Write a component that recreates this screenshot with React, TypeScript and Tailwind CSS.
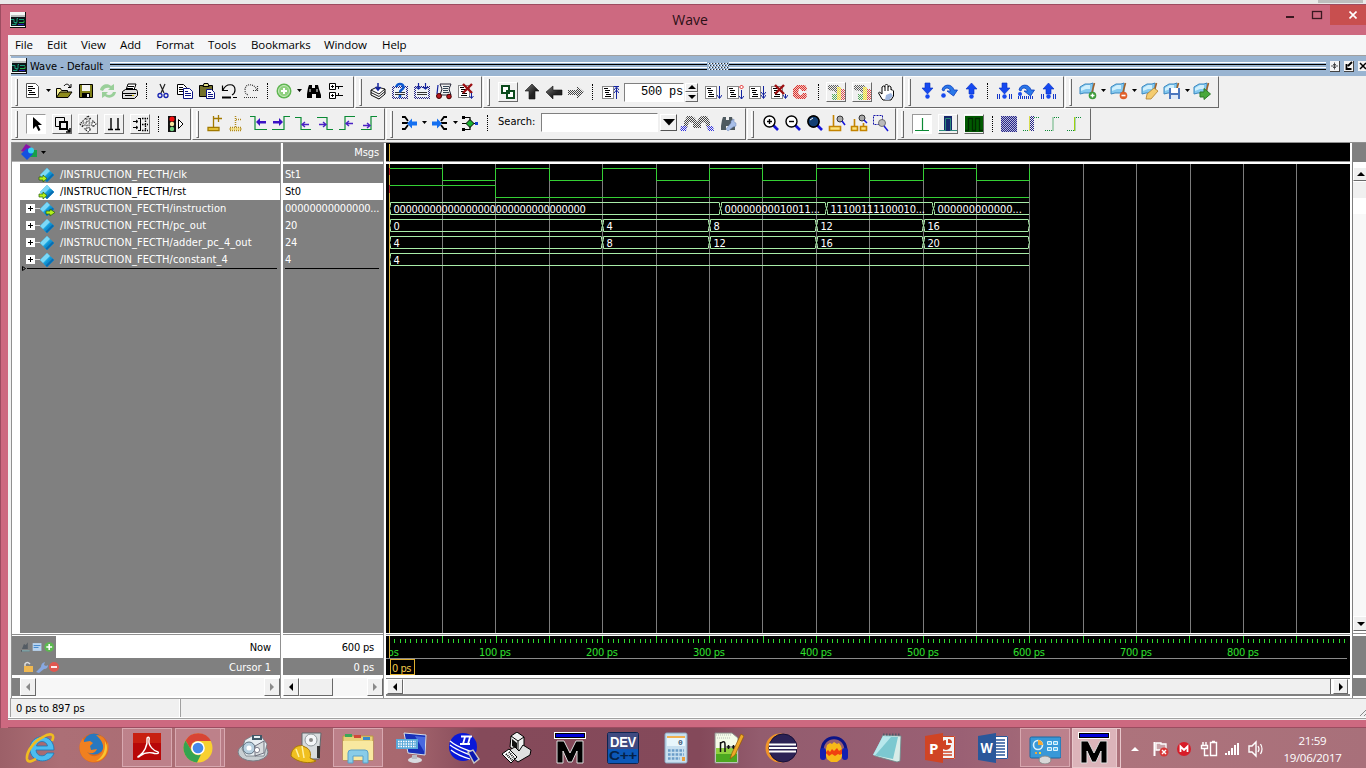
import React from "react";

const r = (x: number, y: number, w: number, h: number, f: string, k?: string) => (
  <rect key={k} x={x} y={y} width={w} height={h} fill={f} />
);
const p = (d: string, s = "#000", f = "none", w = 1) => (
  <path d={d} stroke={s} fill={f} strokeWidth={w} />
);

const sheet = (
  <>
    {r(1, 3, 12, 13, "#888")}
    {r(2, 4, 10, 11, "#fff")}
    {p("M3 5.500h4M4 7.500h5M4 9.500h4M5 11.500h5M4 13.500h6", "#000", "none", 1.2)}
  </>
);
const redX = p("M5 2l9 9M14 2l-9 9", "#9c0f12", "none", 2.4);
const flag = (
  <>
    <path d="M1 5l5-3h5l3-1v9l-4 1H5l-4 1z" fill="#86caf0" stroke="#3b88c0" strokeWidth="1" />
    <path d="M2 6l5-3h4v4H7l-5 2z" fill="#d0effc" />
    <path d="M15.500 1l-3 11" stroke="#a0622b" strokeWidth="1.600" />
  </>
);
const lens = (
  <>
    <path d="M11 11l5 5" stroke="#1414d8" strokeWidth="2.600" />
    <circle cx="7.500" cy="7.500" r="5.500" fill="#fff" stroke="#000" strokeWidth="1.400" />
  </>
);
const binocs = (c: string) => (
  <path d="M4 3h3v3h3V3h3l1 4 2 6v3h-5v-4H7v4H2v-4l1-6z" fill={c} />
);
const jump = (
  <path d="M2 8C3 2 12 1 14 8h3.500L13.500 14 7 9h3.500C9 5 5 5 4 9z" fill="#2a78e8" stroke="#0a3cc0" strokeWidth=".8" />
);
const down = <path d="M7 1h5v5h3l-5.500 6L4 6h3z" fill="#1649f0" stroke="#0630c0" strokeWidth=".6" />;
const up = <path d="M7 12h5V7h3L9.500 1 4 7h3z" fill="#1649f0" stroke="#0630c0" strokeWidth=".6" />;
const dots = p("M2.500 12v5M4.500 12v5M14.500 12v5M16.500 12v5", "#1638c8");
const ball = <circle cx="9.500" cy="14.500" r="2.200" fill="#1649f0" />;
const books = (
  <>
    {p("M2 8v5l8 4 6-5V7", "#000", "#fff")}
    {p("M2 8l6-3 8 2-6 5zM2 10.500l8 4 6-5", "#000", "none", .9)}
  </>
);
const chip = (
  <>
    {r(1, 4, 16, 13, "url(#nv)")}
    {r(3, 6, 12, 9, "#eef2f6")}
    {p("M4 10.500h10M4 12.500h10", "#333", "none", 1)}
  </>
);

const icons: Record<string, React.ReactNode> = {
  doc: (
    <>
      {p("M3.500 1.500h9l3 3v11h-12z", "#555", "#fff")}
      {p("M5 4.500h5M5 6.500h7M5 8.500h4M6 10.500h6M5 12.500h8", "#000")}
    </>
  ),
  open: (
    <>
      {p("M1.500 15.500v-9h4l1 2h6v2", "#000", "#f7f29a")}
      {p("M1.500 15.500l3.500-5.500h12l-4 5.500z", "#000", "#8e8b1c")}
      {p("M9 4c2-3 5-2 6 1M16 2v3.500h-3", "#000")}
    </>
  ),
  save: (
    <>
      {p("M2.500 2.500h13v13h-13z", "#000", "#7f8019")}
      {r(5, 3, 8, 6, "#f4f4f4")}
      {r(5, 11, 8, 4, "#000")}
      {r(10, 12, 2, 3, "#eee")}
    </>
  ),
  reload: (
    <g opacity=".75">
      <path d="M1 8c1-6 8-7 11-4l3-2v6H9l2-2C8 5 5 6 4 9z" fill="#7cc47c" />
      <path d="M17 10c-1 6-8 7-11 4l-3 2v-6h6l-2 2c3 2 6 1 7-2z" fill="#7cc47c" />
    </g>
  ),
  print: (
    <>
      {p("M5 8l2-6h8l-2 6", "#000", "#fff")}
      {p("M1.500 9.500l3-2h11l1 2v4l-3 3h-12z", "#000", "#ddd")}
      {p("M7 4.500h6M6 6.500h6M2 11.500h13M4 13.500h7", "#000")}
      {r(11, 13, 2, 1, "#c8b400")}
    </>
  ),
  cut: (
    <>
      {p("M6 2l4 9M11 2l-4 9", "#222", "none", 1.2)}
      <circle cx="6" cy="13.500" r="2" fill="none" stroke="#1420b0" strokeWidth="1.300" />
      <circle cx="12" cy="13.500" r="2" fill="none" stroke="#1420b0" strokeWidth="1.300" />
    </>
  ),
  copy: (
    <>
      {p("M1.500 2.500h6l3 3v7h-9z", "#000", "#fff")}
      {p("M3 5.500h4M3 7.500h5M3 9.500h4", "#000")}
      {p("M7.500 6.500h6l3 3v7h-9z", "#0c1484", "#fff")}
      {p("M9 9.500h3M9 11.500h6M9 13.500h6", "#0c1484")}
    </>
  ),
  paste: (
    <>
      {p("M1.500 3.500h13v11h-13z", "#000", "#73702b")}
      {p("M5 4.500l1-3h4l1 3z", "#000", "#e8e48c")}
      {p("M8.500 7.500h5l3 3v6h-8z", "#0c1484", "#fff")}
      {p("M10 10.500h3M10 12.500h5M10 14.500h5", "#0c1484")}
    </>
  ),
  undo: (
    <>
      {p("M2.500 9V3.500M2 8.500h6M3 8C6 1 15 1 15 8c0 3-1 4-3 5", "#000", "none", 1.2)}
      {p("M2 15.500h9", "#000", "none", 2)}
      {p("M13 15.500h4", "#000")}
    </>
  ),
  redo: (
    <g strokeDasharray="1 1">
      {p("M15.500 9V3M16 8.500h-6M15 8C12 1 3 1 3 8c0 3 1 4 3 5M2 15.500h14", "#333", "none", 1.2)}
    </g>
  ),
  plus: (
    <>
      <circle cx="9" cy="9" r="7.500" fill="#5fb551" />
      <circle cx="9" cy="9" r="5.500" fill="#8fd07f" stroke="#c9ecc0" strokeWidth="1" />
      {p("M9 6v6M6 9h6", "#fff", "none", 2)}
    </>
  ),
  find: (
    <>
      {binocs("#000")}
      {p("M5 7v3M12 7v3", "#fff")}
    </>
  ),
  tree: (
    <>
      {p("M2.500 1.500h6v6h-6zM2.500 10.500h6v6h-6z", "#000", "#fff")}
      {p("M4 4.500h3M5.500 3v3M4 13.500h3M5.500 12v3M9 4.500h7M9 13.500h7M11.500 4v3M11.500 11v3", "#000")}
    </>
  ),
  compile: (
    <>
      {books}
      {p("M9 1v6M6.500 5L9 8l2.500-3", "#1323a0", "none", 1.5)}
    </>
  ),
  help: (
    <>
      {chip}
      {p("M5.500 5c0-4 7-4 7 0 0 3-3.500 2-3.500 5.500M9 13v2.500", "#0d58d0", "none", 2.6)}
    </>
  ),
  all: (
    <>
      {chip}
      {p("M5.500 1v6M12.500 1v6M3 5l2.500 2L8 5M10 5l2.500 2L15 5", "#1323a0", "none", 1.2)}
    </>
  ),
  sim: (
    <>
      {p("M5 2h11l-2 5 2 6H5l2-6z", "#223", "#f2f2f2")}
      {p("M8 4.500h6M8 6.500h5M8 8.500h5M8 10.500h6", "#345")}
      {p("M3 3l-1 9", "#1323a0", "none", 1.2)}
      <circle cx="4" cy="14" r="2.500" fill="#b8161e" stroke="#400" />
      <circle cx="14" cy="14.500" r="2.300" fill="#b8161e" stroke="#400" />
    </>
  ),
  brk: (
    <>
      {sheet}
      {p("M6 2l9 9M15 2l-9 9", "#9c0f12", "none", 2.4)}
      {p("M14.500 11v5M12.500 14l2 2.500 2-2.500", "#1323a0")}
    </>
  ),
  restart: (
    <>
      {p("M3 3h7v7H3zM8 8h7v7H8z", "#0b4a1c", "#fff", 2)}
      {p("M6 10h4V6", "#0b4a1c", "none", 2)}
    </>
  ),
  aup: <path d="M9 1l7 7h-4v8H6V8H2z" fill="url(#met)" stroke="#111" strokeWidth=".6" />,
  aleft: <path d="M1 9l7-6v4h9v5H8v4z" fill="url(#met)" stroke="#111" strokeWidth=".6" />,
  aright: <path d="M17 9l-7-6v4H1v5h9v4z" fill="url(#dk)" />,
  runup: (
    <>
      {sheet}
      {p("M15.500 5v11M12.500 3.500h6M13 7l2.500-3L18 7M13 10l2.500-3L18 10", "#1323a0")}
    </>
  ),
  run1: (
    <>
      {sheet}
      {p("M15.500 3v12M13 12l2.500 3.500L18 12", "#1323a0")}
    </>
  ),
  run2: (
    <>
      {sheet}
      {p("M15.500 7v9M13 13l2.500 3L18 13", "#1323a0")}
      {p("M15.500 2l2 2-2 2-2-2z", "#e02020", "#fff")}
    </>
  ),
  run3: (
    <>
      {sheet}
      {p("M15.500 3v12M13 9l2.500 3L18 9M13 12l2.500 3.500L18 12", "#1323a0")}
    </>
  ),
  run4: (
    <>
      {sheet}
      {redX}
      {p("M15.500 11v4M13 12l2.500 3.500L18 12", "#1323a0")}
    </>
  ),
  stop: (
    <>
      <path d="M6 2h8l2 3-1 3h-4l-1-2H8L7 9l1 3h3l1-2h3l1 3-2 3H6l-4-3V6z" fill="#f4c8c0" />
      <path d="M6 2h8l2 3-1 3h-4l-1-2H8L7 9l1 3h3l1-2h3l1 3-2 3H6l-4-3V6z" fill="url(#rd)" />
    </>
  ),
  prof: (
    <g opacity=".85">
      <path d="M1 2h10l2 4-3 4-3-2-6-1z" fill="url(#dk)" />
      {r(10, 4, 4, 13, "#f6efa8")}
      {r(10, 4, 4, 13, "url(#yl)")}
      {r(14, 6, 4, 11, "url(#rd)")}
      {r(5, 11, 5, 6, "url(#gn)")}
    </g>
  ),
  hand: (
    <>
      <path
        d="M5 16L1.500 10l1-1L5 11V4l1.500-1L8 4V2.500L9.500 1 11 2.500V4l1.500-1L14 4v3l1-.500L16.500 8v5L14 17H6z"
        fill="#fff"
        stroke="#000"
      />
      {p("M8 4v4M11 4v4", "#000")}
      <path d="M9 12l5-2 2 3-4 4H8z" fill="#9fb6df" />
    </>
  ),
  sdown: (<>{down}{ball}</>),
  sover: (<>{jump}<circle cx="3.500" cy="13.500" r="2.300" fill="#1649f0" /></>),
  sup: (<>{up}{ball}</>),
  sdown2: (<>{down}{ball}{dots}</>),
  sover2: (
    <>
      {jump}
      {p("M1.500 14v3M3.500 14v3M5.500 14v3M7.500 14v3M9.500 14v3M11.500 14v3M13.500 14v3M15.500 14v3", "#1638c8")}
      <circle cx="3" cy="12" r="2" fill="#1649f0" />
    </>
  ),
  sup2: (<>{up}{ball}{dots}</>),
  f1: (<>{flag}<circle cx="13.500" cy="13.500" r="3.800" fill="#3d9a3a" />{p("M13.500 11.500v4M11.500 13.500h4", "#fff", "none", 1.4)}</>),
  f2: (<>{flag}<circle cx="13.500" cy="13.500" r="3.800" fill="#e0602a" />{p("M11.500 13.500h4", "#fff", "none", 1.6)}</>),
  f3: (<>{flag}<path d="M5 17l1-5 7-6 4 3-7 8z" fill="#f4cc70" stroke="#b08030" strokeWidth=".8" /></>),
  f4: (<>{flag}{r(6, 6, 11, 11, "#4d78bf")}{r(8, 6, 7, 5, "#fff")}{r(8, 13, 7, 4, "#dfeaf8")}</>),
  f5: (<>{flag}<path d="M7 10h4V6.500l6.500 5.500-6.500 5.500V15H7z" fill="#49a83c" stroke="#2c7a26" /></>),
  ptr: <path d="M6 2v12l3-3 2.500 5 2-1L11 10h4z" fill="#000" />,
  sel: (
    <>
      {p("M2.500 2.500h9v4M2.500 2.500v9h4", "#000")}
      {p("M7 7h7v7H7z", "#000", "none", 2)}
      {p("M13 13l4 4M17 13v4h-4", "#000", "none", 1.5)}
    </>
  ),
  pan: (
    <g strokeDasharray="1.500 1">
      {p("M9 1l3 3h-2v4h4V6l3 3-3 3v-2h-4v4h2l-3 3-3-3h2v-4H4v2L1 9l3-3v2h4V4H6z", "#222", "#fff", 1.1)}
    </g>
  ),
  twoc: p("M6 3v12M13 3v12M3 14.500h5M10 14.500h5", "#000", "none", 1.4),
  edit: (
    <>
      {p("M2 6.500h4M2 12.500h4M5 5l2 1.500L5 8M5 11l2 1.500L5 14M9.500 3v12M7 3.500h3M7 15.500h3", "#000")}
      <g strokeDasharray="1.500 1">{p("M14.500 3v13M11 3.500h6M11 15.500h6M11 9.500h6", "#000", "none", 1.3)}</g>
    </>
  ),
  light: (
    <>
      {r(1, 1, 8, 16, "#111")}
      <circle cx="5" cy="4" r="2.600" fill="#f01010" />
      <circle cx="5" cy="9" r="2.200" fill="#f7e8a0" />
      <circle cx="5" cy="14" r="2.200" fill="#70d080" />
      {p("M11.500 4.500v9l4.500-4.500z", "#000", "#fff")}
    </>
  ),
  cadd: (
    <>
      {p("M2 13.500h11v3H2zM7.500 2v11", "#a27a00", "#f6d648", 1.3)}
      {p("M8 4.500h8M12.500 1v7", "#a27a00", "none", 1.3)}
    </>
  ),
  cdel: <g strokeDasharray="1 1">{p("M2 13.500h11v3H2zM7.500 2v11M8 5.500h6", "#b08a20", "#f6e490", 1.5)}</g>,
  tprev: (<>{p("M0 2.500h5v13h12", "#0a8a34", "none", 1.2)}<path d="M6 8l4-4v3h6v2.500h-6V12z" fill="#3a12c4" /></>),
  tnext: (<>{p("M0 15.500h12v-13h6", "#0a8a34", "none", 1.2)}<path d="M11 8L7 4v3H1v2.500h6V12z" fill="#3a12c4" /></>),
  fprev: (<>{p("M1 3.500h6v12h10", "#0a8a34", "none", 1.2)}{p("M8 10.500h7M11 8l-3 2.500 3 2.500", "#4a22c4", "none", 1.4)}</>),
  fnext: (<>{p("M1 3.500h10v12h6", "#0a8a34", "none", 1.2)}{p("M3 10.500h7M7 8l3 2.500L7 13", "#4a22c4", "none", 1.4)}</>),
  rprev: (<>{p("M1 15.500h6v-13h10", "#0a8a34", "none", 1.2)}{p("M8 9.500h7M11 7L8 9.500 11 12", "#4a22c4", "none", 1.4)}</>),
  rnext: (<>{p("M1 15.500h10v-13h6", "#0a8a34", "none", 1.2)}{p("M3 11.500h7M7 9l3 2.500L7 14", "#4a22c4", "none", 1.4)}</>),
  drv: (<>{p("M2 3h3l3 4M2 15h3l3-4M2 9h6", "#000", "none", 1.8)}<path d="M7 9.500l5-5v3h5v4h-5v3z" fill="#1570f0" /></>),
  rdr: (<>{p("M16 3h-3l-3 4M16 15h-3l-3-4M10 9h6", "#000", "none", 1.8)}<path d="M11 9.500l-5-5v3H1v4h5v3z" fill="#1570f0" /></>),
  net: (
    <>
      {p("M4 3.500h5v12H4M1 9.500h14", "#000", "none", 1.2)}
      {r(1, 2, 3, 3, "#000")}{r(1, 14, 3, 3, "#000")}{r(14, 8, 3, 3, "#1540d0")}
      <path d="M9 5.500l4 4-4 4-4-4z" fill="#1ab030" stroke="#000" />
    </>
  ),
  bin1: (<><path d="M8 2h5l3 2 2 4v6h-4V9l-4-1-2 6H5V8z" fill="url(#dk)" /><path d="M1 17l1-5h6l-1 5z" fill="url(#bl)" /></>),
  bin2: (<><path d="M10 2H5L2 4 0 8v6h4V9l4-1 2 6h3V8z" fill="url(#dk)" /><path d="M17 17l-1-5h-6l1 5z" fill="url(#bl)" /></>),
  opt: (<>{binocs("#4e5a60")}<path d="M9 17l-2-2 5-6V7l3-2v3l2 1v3l-3 1z" fill="#a8bfe8" stroke="#6c86b8" strokeWidth=".5" /></>),
  zin: (<>{lens}{p("M5 7.500h5M7.500 5v5", "#000", "none", 1.4)}</>),
  zout: (<>{lens}{p("M5 7.500h5", "#000", "none", 1.4)}</>),
  zfull: (<>{lens}<circle cx="7.500" cy="7.500" r="5.500" fill="#123f74" stroke="#000" strokeWidth="1.400" /><path d="M4 6l3-2" stroke="#fff" /></>),
  zc: (<>{p("M1.500 12.500h11v4h-11zM5.500 1v11", "#c48400", "#fbe27a", 1.6)}<circle cx="12" cy="5" r="3" fill="#aaa" stroke="#333" />{p("M14 7l3 4", "#1414d8", "none", 1.5)}</>),
  zc2: (<>{p("M1.500 12.500h6v4h-6zM10.500 12.500h6v4h-6zM4.500 5v7M13.500 9v3", "#c48400", "#fbe27a", 1.6)}<circle cx="12" cy="4" r="3" fill="#aaa" stroke="#333" />{p("M14 6l3 3", "#1414d8", "none", 1.5)}</>),
  zsel: (<><g strokeDasharray="2 1">{p("M1.500 1.500h9v9h-9z", "#1414a8")}</g><circle cx="10" cy="9" r="3.500" fill="#bbb" stroke="#666" strokeWidth=".9" />{p("M12 12l4 5", "#1414d8", "none", 1.5)}</>),
  w1: p("M2 15.500h14M9.500 3v12", "#0a8a34", "none", 1.2),
  w2: (<>{r(5, 1, 8, 15, "#16286c")}{p("M0 15.500h6.500v-12h5v12H18", "#2b8a7a")}</>),
  w3: (<>{r(0, 1, 18, 16, "#005a00")}{p("M0 15.500h3.500v-12h4v12h3v-12h4v12h4", "#002c00", "none", 1.3)}</>),
  w4: (<>{r(1, 1, 16, 16, "#b8b8d8")}{r(1, 1, 16, 16, "url(#nv)")}</>),
  w5: (<>{r(8, 1, 4, 15, "url(#nv)")}{r(7, 1, 1, 15, "#d8dc50")}<g strokeDasharray="1 1">{p("M1 15.500h6M12 2.500h5", "#0a8a34")}</g></>),
  w6: <g strokeDasharray="1 1">{p("M1 15.500h8v-13h7", "#0a8a34", "none", 1.2)}</g>,
  w7: (<>{r(8, 2, 1, 14, "#e0f000")}<g strokeDasharray="1 1">{p("M1 15.500h8v-13h7", "#0a8a34", "none", 1.2)}</g></>),
};

const Ic = ({ n, c = "w-[22px]" }: { n: string; c?: string }) => (
  <span className={`flex shrink-0 justify-center ${c}`}>
    <svg width="18" height="18" viewBox="0 0 18 18">{icons[n]}</svg>
  </span>
);
const Btn = ({ n, on, c = "" }: { n: string; on?: boolean; c?: string }) => (
  <span
    className={`flex h-5 w-5 shrink-0 items-center justify-center border ${c} ${
      on ? "border-[#999] border-r-white border-b-white bg-white" : "border-white border-r-[#696969] border-b-[#696969] bg-[#f0f0f0]"
    }`}
  >
    <svg width="18" height="18" viewBox="0 0 18 18">{icons[n]}</svg>
  </span>
);
const Arr = ({ c = "w-[10px]" }: { c?: string }) => (
  <span className={`flex shrink-0 justify-center ${c}`}>
    <svg width="5" height="3" viewBox="0 0 5 3"><path d="M0 0h5L2.500 3z" /></svg>
  </span>
);
const Sep = ({ c = "w-[11px]" }: { c?: string }) => (
  <span className={`flex shrink-0 justify-center ${c}`}>
    <span className="h-[16px] border-l border-dotted border-black" />
  </span>
);
const Bar = ({ c, pad, children }: { c: string; pad: string; children: React.ReactNode }) => (
  <div className={`flex h-8 shrink-0 border-t border-l border-r border-b border-t-white border-l-white border-r-[#696969] border-b-[#696969] ${c}`}>
    <div className="mt-[2px] ml-[3px] h-[27px] w-[3px] shrink-0 border-r border-b border-l border-white border-r-[#696969] border-b-[#696969]" />
    <div className={`flex items-center ${pad}`}>{children}</div>
  </div>
);

const App16 = () => (
  <svg width="16" height="16" viewBox="0 0 16 16" className="shrink-0">
    {r(0, 0, 16, 16, "#111")}
    {r(0, 0, 15, 15, "#f4f6f6")}
    {r(1, 3, 14, 2, "#b8bcbc")}
    {r(1, 5, 14, 9, "#0c1418")}
    {p("M1 7.500h3v3h3v-4h1M9 7.500h5M2 12.500h4v-2", "#1a9a7a", "none", 1)}
    {p("M9 10.500h5v-2", "#27b04a")}
    {r(8, 12, 6, 1, "#2424c0")}
  </svg>
);

const Gem = ({ a }: { a?: "in" | "out" }) => (
  <svg width="18" height="16" viewBox="0 0 18 16" className="shrink-0">
    <path d="M9 1l7 7-7 7-7-7z" fill="#18a4e0" />
    <path d="M9 1L2 8l3 3 7-7z" fill="#7cd8f6" />
    <path d="M9 15l7-7-3-3-7 7z" fill="#1090d0" />
    <path d="M9 15l7-7-1.500-1.500-7 7z" fill="#0a6cb0" />
    {a === "in" && <path d="M1 10h4V8l4 3.500L5 15v-2H1z" fill="#b4f01c" stroke="#245c08" strokeWidth=".7" />}
    {a === "out" && <path d="M8 10h4V8l5 3.500-5 3.500v-2H8z" fill="#b4f01c" stroke="#245c08" strokeWidth=".7" />}
  </svg>
);

const signals: { n: string; v: string; a?: "in" | "out"; x?: boolean; s?: boolean }[] = [
  { n: "/INSTRUCTION_FECTH/clk", v: "St1", a: "in" },
  { n: "/INSTRUCTION_FECTH/rst", v: "St0", a: "in", s: true },
  { n: "/INSTRUCTION_FECTH/instruction", v: "00000000000000...", a: "out", x: true },
  { n: "/INSTRUCTION_FECTH/pc_out", v: "20", x: true },
  { n: "/INSTRUCTION_FECTH/adder_pc_4_out", v: "24", x: true },
  { n: "/INSTRUCTION_FECTH/constant_4", v: "4", x: true },
];

const gx = [56, 109, 163, 216, 270, 323, 376, 430, 483, 537, 590, 643, 697, 750, 804, 857, 910];
const OX = 3;

type Seg = { x: number; t: string; w: number };
const buses: { y: number; end: boolean; segs: Seg[] }[] = [
  { y: 38, end: false, segs: [
    { x: 3, t: "00000000000000000000000000000000", w: 192 },
    { x: 334, t: "00000000010011...", w: 95 },
    { x: 440, t: "11100111100010...", w: 94 },
    { x: 547, t: "000000000000...", w: 84 },
  ] },
  { y: 55, end: true, segs: [
    { x: 3, t: "0", w: 6 }, { x: 216, t: "4", w: 6 }, { x: 323, t: "8", w: 6 }, { x: 430, t: "12", w: 12 }, { x: 537, t: "16", w: 12 },
  ] },
  { y: 72, end: true, segs: [
    { x: 3, t: "4", w: 6 }, { x: 216, t: "8", w: 6 }, { x: 323, t: "12", w: 12 }, { x: 430, t: "16", w: 12 }, { x: 537, t: "20", w: 12 },
  ] },
  { y: 89, end: false, segs: [{ x: 3, t: "4", w: 6 }] },
];

const Waves = () => {
  const clk = [OX, ...gx.slice(0, 12)];
  let d = `M${OX} 4.5`;
  clk.slice(1).forEach((x, i) => {
    d += `H${x + 0.5}V${i % 2 === 0 ? 16.5 : 4.5}`;
  });
  return (
    <svg width="964" height="469" viewBox="0 0 964 469" className="block bg-black">
      {gx.map((x) => <rect key={x} x={x} y="0" width="1" height="469" fill="#7c7c7c" />)}
      <path d={d} fill="none" stroke="#34d034" />
      <path d={`M${OX} 21.500H109.500V33.500H643`} fill="none" stroke="#34d034" />
      {buses.map((b) => (
        <g key={b.y}>
          {b.segs.map((s, i) => {
            const e = i + 1 < b.segs.length ? b.segs[i + 1].x : 643;
            const close = i + 1 < b.segs.length || b.end;
            return (
              <g key={s.x}>
                <path
                  d={`M${close ? e - 1 : e} ${b.y + 0.5}H${s.x + 1.5}v3l-1 3l1 3v3H${close ? e - 1 : e}`}
                  fill="none"
                  stroke="#a8eca8"
                />
                {close && <path d={`M${e - 0.5} ${b.y + 0.5}v3l1 3l-1 3v3`} fill="none" stroke="#a8eca8" />}
                <text
                  x={s.x + 4.5}
                  y={b.y + 11}
                  textLength={s.w}
                  className="fill-white text-[11px]"
                >
                  {s.t}
                </text>
              </g>
            );
          })}
        </g>
      ))}
      <rect x="3" y="0" width="1" height="469" fill="#d8b040" />
      <rect x="3" y="4" width="1" height="7" fill="#b02020" />
      <rect x="3" y="21" width="1" height="8" fill="#b02020" />
    </svg>
  );
};

const Timeline = () => (
  <svg width="964" height="39" viewBox="0 0 964 39" className="block bg-black">
    {Array.from({ length: 179 }, (_, i) => {
      const x = Math.round(OX + (i + 1) * 5.336);
      const major = (i + 1) % 10 === 0;
      return <rect key={i} x={x} y={major ? 0 : 3} width="1" height={major ? 7 : 4} fill="#2fd82f" />;
    })}
    {["100", "200", "300", "400", "500", "600", "700", "800"].map((t, i) => (
      <text key={t} x={gx[i * 2 + 1] - 16} y="20" textLength="31.500" className="fill-[#2fe02f] text-[11px]">
        {t} ps
      </text>
    ))}
    <text x="1.500" y="20" textLength="11" className="fill-[#2fe02f] text-[11px]">ps</text>
    {r(0, 0, 3, 22, "#000")}
    {r(0, 22, 961, 1, "#8a8a8a")}
    {r(3, 0, 1, 22, "#d8b040")}
    <rect x="4.500" y="23.500" width="24" height="15" fill="#000" stroke="#e0b030" />
    <text x="6" y="35.500" textLength="19" className="fill-[#f0c848] text-[11px]">0 ps</text>
  </svg>
);

const SB = ({ d, off, c = "h-full w-4" }: { d: "l" | "r" | "u" | "d"; off?: boolean; c?: string }) => (
  <div className={`flex shrink-0 items-center justify-center border border-white border-r-[#696969] border-b-[#696969] bg-[#f0f0f0] ${c}`}>
    <svg width="8" height="8" viewBox="0 0 8 8" className="shrink-0">
      <path
        d={d === "l" ? "M6 0v8L2 4z" : d === "r" ? "M2 0v8l4-4z" : d === "u" ? "M0 6h8L4 2z" : "M0 2h8L4 6z"}
        fill={off ? "#8a8a8a" : "#000"}
      />
    </svg>
  </div>
);

const M = (
  <>
    {r(0, 0, 32, 7, "#fff")}
    {r(1, 1, 30, 5, "#000")}
    {r(2, 2, 28, 3, "#0000d8")}
    <path d="M3 31V9h7l6 12 6-12h7v22h-6V19l-5 11h-4L9 19v12z" fill="#000" stroke="#ddd" strokeWidth="1" />
  </>
);

const taskIcons: { k: string; g: React.ReactNode; b?: boolean }[] = [
  { k: "ie", g: (<>
    <path d="M29 18H11c0 6 8 8 11 3h7c-4 12-24 10-24-4C5 1 29 0 29 18zM11.500 14h11c-1-6-10-6-11 0z" fill="#4cbcf0" stroke="#1878b8" strokeWidth=".8" fillRule="evenodd" />
    <path d="M27 9c4-8-3-8-9-4C9 9 1 20 2 27c1 5 7 1 9 0" fill="none" stroke="#f0bc20" strokeWidth="2.600" />
  </>) },
  { k: "ff", g: (<>
    <circle cx="16" cy="16" r="14.500" fill="#e06818" />
    <circle cx="16" cy="12" r="10.500" fill="#2878c0" />
    <path d="M18 3c6 0 10 4 10 10l2-3c2 9-3 20-14 20S0 20 2 11l3-5 1 4 6-1 3 2-3 3 1 4 6-1c-2 5-7 5-10 3 4 6 12 5 15 0 3-6 0-12-6-17z" fill="#f08020" />
    <path d="M27 9c5 9 0 19-9 20 6-3 10-10 9-20z" fill="#f8c830" />
  </>) },
  { k: "pdf", b: true, g: (<>
    {r(2, 1, 28, 27, "#b80808")}{r(2, 1, 28, 10, "#c82010")}
    <path d="M8 24c5-3 9-11 8-17 0-3 3-2 2 1-1 6 5 11 9 12 2 2-3 2-5 1-5-1-9 0-13 3-2 2-3 1-1 0z" fill="none" stroke="#fff" strokeWidth="1.400" />
  </>) },
  { k: "chrome", b: true, g: (<>
    <circle cx="16" cy="16" r="14.500" fill="#f8d030" />
    <path d="M3.500 8.500A14.500 14.500 0 0 1 29 9H16a7 7 0 0 0-6 11z" fill="#d84434" />
    <path d="M3.500 8.500l6.500 11a7 7 0 0 0 9 3l-4 8A14.500 14.500 0 0 1 3.500 8.500z" fill="#34a450" />
    <circle cx="16" cy="16" r="6.800" fill="#fff" /><circle cx="16" cy="16" r="5.300" fill="#4488e8" />
  </>) },
  { k: "disk", g: (<>
    <ellipse cx="16" cy="20" rx="15" ry="9" fill="#c8ced2" stroke="#788088" />
    <path d="M5 17l3-9 7-4h9l6 8-3 12H9z" fill="#e8eef2" stroke="#707a82" strokeWidth=".8" />
    {r(15, 3, 10, 5, "#405868")}{r(17, 4, 6, 2, "#e8f0f4")}
    <circle cx="12" cy="16" r="6" fill="#b8d0e0" stroke="#456" strokeWidth=".8" /><circle cx="12" cy="16" r="2.500" fill="#fff" />
    <path d="M18 14l9-5v12l-9 3z" fill="#d8dcde" stroke="#556" strokeWidth=".8" /><circle cx="20" cy="18" r="2.600" fill="#fff" stroke="#667" strokeWidth=".8" />
  </>) },
  { k: "hdd", g: (<>
    <path d="M12 1h19l-2 26H12z" fill="#d8dcde" stroke="#60686c" /><circle cx="21" cy="8" r="6" fill="#f4f6f8" stroke="#90989c" />
    <circle cx="21" cy="8" r="2" fill="#888" />{r(27, 14, 3, 12, "#333")}
    <path d="M1 24c0-8 8-13 14-9 6 2 6 8 5 11l6 3c-6 3-18 2-25-5z" fill="#f0c020" stroke="#a87808" />
    <path d="M6 17l3 8M12 14l2 12" stroke="#fff0a0" strokeWidth="1.500" />
  </>) },
  { k: "explorer", b: true, g: (<>
    <path d="M1 4h30v24H1z" fill="#e8d078" stroke="#b89840" />{r(3, 2, 7, 3, "#3aa858")}{r(12, 3, 7, 3, "#d04838")}{r(21, 5, 7, 3, "#3888c8")}
    <path d="M1 9h30v19H1z" fill="#f8e8a0" />
    <path d="M6 31v-10q0-3 3-3h14q3 0 3 3v10h-5v-7H11v7z" fill="#88cce8" stroke="#58a0c8" />
  </>) },
  { k: "rdp", g: (<>
    <path d="M9 1l22 2-1 20-17-2z" fill="#1830b8" stroke="#d8e0e8" /><path d="M20 4l10 1v16z" fill="#4868e0" />
    {r(1, 7, 22, 10, "#5aa8d8")}<path d="M3 9.500h18M3 12h18M3 14.500h18" stroke="#fff" strokeWidth="1.400" strokeDasharray="1.500 1" />
    <ellipse cx="20" cy="28" rx="7" ry="3" fill="#d8dce0" />{r(17, 23, 5, 4, "#b8bcc4")}
  </>) },
  { k: "quartus", g: (<>
    <circle cx="15" cy="15" r="14" fill="#0a18d8" />
    <path d="M2 13c8 6 14 7 22 11M3 18c6 5 12 7 19 9M2 9c8 7 16 8 24 12" stroke="#fff" strokeWidth="1.300" fill="none" />
    <path d="M13 4.500h11M12 12h10M17 5l-2 7M22 5l-2 7" stroke="#fff" strokeWidth="1.800" />
    <path d="M20 20l5-2 6 9-5 4z" fill="#0a18b0" stroke="#c8c8c8" strokeWidth="1.400" />
  </>) },
  { k: "comp", g: (<>
    <path d="M10 4l6-4 7 5v11l-7 4-7-5z" fill="#f0f0f0" stroke="#000" /><path d="M11 7l5 4v6l-5-3z" fill="#111" /><path d="M10 4l7 5v10M17 9l6-4" stroke="#000" fill="none" />
    <path d="M8 18l6-3 4 4 4-6 8 5-1 5-12 7-8-6z" fill="#e0e0e0" stroke="#000" /><path d="M1 22l7-5 8 8-6 6z" fill="#fff" stroke="#000" />
    <path d="M5 22l7 7M8 20l6 7" stroke="#000" strokeDasharray="1 1" strokeWidth="2" />
  </>) },
  { k: "m1", g: M },
  { k: "dev", g: (<>
    <rect x=".5" y=".5" width="31" height="31" rx="2" fill="#12408c" stroke="#0c2450" />{r(1, 1, 30, 16, "#404a80")}{r(1, 17, 30, 14, "#0c58b8")}
    <text x="3" y="15" textLength="26" lengthAdjust="spacingAndGlyphs" className="fill-white font-['Liberation_Sans',sans-serif] text-[14px] font-bold">DEV</text>
    <text x="2" y="28" textLength="28" lengthAdjust="spacingAndGlyphs" className="fill-[#052248] font-['Liberation_Sans',sans-serif] text-[13px] font-bold">C++</text>
  </>) },
  { k: "calc", g: (<>
    <rect x="5" y="1" width="22" height="30" rx="1.500" fill="#c8e0f0" stroke="#88a8c0" />{r(7, 4, 18, 2, "#f0b050")}{r(7, 6, 18, 8, "#e8f6fc")}
    <text x="18" y="13" className="fill-[#3a5a78] font-['Liberation_Mono',monospace] text-[8px] font-bold">0</text>
    <path d="M8 18.500h16M8 22.500h16M8 26.500h12" stroke="#6a9cc8" strokeWidth="2.600" strokeDasharray="2.600 1.200" />{r(22, 25, 3, 4, "#e8a040")}
  </>) },
  { k: "npp", g: (<>
    <path d="M3 1h17l6 5v25H3z" fill="#f4fbe8" stroke="#888" />{r(4, 16, 21, 14, "#90d040")}{r(4, 22, 21, 8, "#4ca820")}
    <path d="M4 3h15M5 6h14" stroke="#bbb" strokeDasharray="1 1" />
    <path d="M8.500 20V10M9 11c4-3 4 0 4 2v7M14.500 15h4M16.500 13v4M19.500 15h4M21.500 13v4" stroke="#111" strokeWidth="1.500" fill="none" />
    <path d="M18 27l2-6L29 2l3 2-9 19z" fill="#f0a828" stroke="#905808" strokeWidth=".7" />
  </>) },
  { k: "eclipse", g: (<>
    <circle cx="15" cy="16" r="14.500" fill="#f09428" /><circle cx="18" cy="16" r="14" fill="#2c2255" stroke="#181038" />
    <path d="M4 12.500h27M4 16h28M4 19.500h27" stroke="#fff" strokeWidth="1.800" />
  </>) },
  { k: "audacity", g: (<>
    <path d="M4 20C3 1 29 1 28 20" fill="none" stroke="#0c1488" strokeWidth="3" />
    <path d="M7 21l2-8 3-2 2 1 2-2 3 2 2-1 2 3 2 7-2 6-4 3h-6l-4-3z" fill="#f8b818" /><path d="M7 21l3-3 2 2 2-3 2 2 3-3 2 3 3-2 1 4-3 2-2-1-3 2-3-2-3 2-2-2z" fill="#f04010" />
    <rect x="2" y="16" width="6" height="12" rx="3" fill="#1420b0" /><rect x="24" y="16" width="6" height="12" rx="3" fill="#1420b0" />
  </>) },
  { k: "notepad", g: (<>
    <path d="M12 3l18 1-1 25-3 1-22-6z" fill="#d8ece8" stroke="#6a8c8c" strokeWidth=".8" /><path d="M12 4l15 1-5 22-20-4z" fill="#7cc8d0" /><path d="M12 4l8 1L4 23.500 2 23z" fill="#b8e8ec" />
    <path d="M12 2.500h17" stroke="#556" strokeWidth="2" strokeDasharray="1.500 1.500" />
  </>) },
  { k: "ppt", g: (<>
    {r(14, 4, 17, 23, "#f4f4f4")}<path d="M14 4.500h16.500v22H14" fill="none" stroke="#d04424" />
    <path d="M22 8a5 5 0 1 0 5 5h-5z" fill="#d04424" /><path d="M24 7v4h4a4 4 0 0 0-4-4z" fill="#d04424" /><path d="M19 20h9M19 23h9" stroke="#d04424" strokeWidth="1.500" />
    <path d="M1 4l18-3v30L1 28z" fill="#d04424" />
    <text x="5" y="21.500" className="fill-white font-['Open_Sans',sans-serif] text-[15px] font-bold">P</text>
  </>) },
  { k: "word", g: (<>
    {r(14, 4, 17, 23, "#fff")}<path d="M14 4.500h16.500v22H14" fill="none" stroke="#2a579a" /><path d="M19 8h9M19 11h9M19 14h9M19 17h9M19 20h9M19 23h9" stroke="#2a579a" strokeWidth="1.300" />
    <path d="M1 4l18-3v30L1 28z" fill="#2a579a" />
    <text x="3.500" y="21" textLength="12" lengthAdjust="spacingAndGlyphs" className="fill-white font-['Open_Sans',sans-serif] text-[14px] font-bold">W</text>
  </>) },
  { k: "cpl", b: true, g: (<>
    <rect x="1" y="5" width="31" height="21" rx="1.500" fill="#3898d8" stroke="#1c68a0" />
    <circle cx="9" cy="13" r="4.500" fill="none" stroke="#d8f0fc" strokeWidth="1.600" /><path d="M9 13V8a5 5 0 0 1 5 5z" fill="#f0a838" />
    <path d="M18.500 9.500h4v3h-4zM24.500 9.500h4v3h-4zM18.500 15.500h4v3h-4zM24.500 15.500h4v3h-4z" fill="#60c0f0" stroke="#e0f4fc" />
    {r(6, 20, 2, 2, "#f0a838")}{r(10, 20, 2, 2, "#f0d838")}<ellipse cx="16" cy="28" rx="6" ry="4" fill="#d8d8d8" stroke="#888" />
  </>) },
];

const menus: [string, string][] = [
  ["File", "w-[32px]"], ["Edit", "w-[34px]"], ["View", "w-[39px]"], ["Add", "w-[36px]"], ["Format", "w-[52px]"],
  ["Tools", "w-[43px]"], ["Bookmarks", "w-[73px]"], ["Window", "w-[58px]"], ["Help", "w-[40px]"],
];

export default function App() {
  return (
    <div className="flex h-[768px] w-[1366px] flex-col overflow-hidden bg-[#e9e9e9] font-['DejaVu_Sans_Condensed','Noto_Sans',sans-serif] text-[11px] leading-none tracking-[-0.3px] text-black">
      <svg width="0" height="0" className="absolute">
        <defs>
          {[["dk", "#444"], ["gn", "#3aa040"], ["rd", "#d83030"], ["yl", "#e8d820"], ["bl", "#3030e0"], ["nv", "#242488"]].map(([id, c]) => (
            <pattern key={id} id={id} width="2" height="2" patternUnits="userSpaceOnUse">
              {r(0, 0, 1, 1, c)}{r(1, 1, 1, 1, c)}
            </pattern>
          ))}
          <linearGradient id="met" x1="0" x2="1" y1="0" y2="1">
            <stop offset="0" stopColor="#777" /><stop offset=".6" stopColor="#222" />
          </linearGradient>
        </defs>
      </svg>
      <div className="flex h-1 shrink-0 justify-end"><div className="mr-[3px] h-[3px] w-[45px] bg-[#bdbdbd]" /></div>

      <div className="flex h-[724px] shrink-0 flex-col border-t border-l border-[#9c4c60] bg-[#cd6980] pl-[7px]">
        <header className="flex h-[30px] shrink-0 items-start">
          <div className="mt-[7px] ml-[2px]"><App16 /></div>
          <h1 className="mt-[5px] flex-1 pl-[2px] text-center font-['Open_Sans',sans-serif] text-[14px] leading-[20px] tracking-[0px] text-[#2a1016]">
            <span className="ml-[78px]">Wave</span>
          </h1>
          <svg width="56" height="20" viewBox="0 0 56 20" className="shrink-0">
            {r(12, 11, 8, 2, "#3a1820")}
            <rect x="38.500" y="6.500" width="9" height="7" fill="none" stroke="#3a1820" strokeWidth="1.300" />
          </svg>
          <div className="flex h-5 w-[36px] shrink-0 items-center justify-center bg-[#c84f4f] pl-[9px]">
            <svg width="8" height="8" viewBox="0 0 8 8">{p("M.5.5l7 7M7.500.5l-7 7", "#fff", "none", 1.6)}</svg>
          </div>
        </header>

        <div className="flex h-[685px] shrink-0 flex-col bg-[#f0f0f0]">
          <nav className="flex h-[20px] shrink-0 items-center bg-[#f5f6f7] pl-[7px] font-['Open_Sans',sans-serif] text-[11.500px] tracking-[-0.1px]">
            {menus.map(([m, w]) => <span key={m} className={`whitespace-nowrap ${w}`}>{m}</span>)}
          </nav>
          <div className="ml-[2px] h-px shrink-0 bg-[#a0a0a0]" />

          <div className="ml-[3px] flex h-[20px] shrink-0 items-center bg-[#99b4d1]">
            <App16 />
            <span className="ml-[3px] w-[80px] shrink-0 whitespace-nowrap tracking-[0px]">Wave - Default</span>
            <div className="flex h-[8px] flex-1 flex-col">
              <i className="h-px bg-white" /><i className="mt-px h-px bg-black" /><i className="mt-[2px] h-px bg-white" /><i className="mt-px h-px bg-black" />
            </div>
            <svg width="22" height="9" viewBox="0 0 22 9">
              {r(0, 0, 22, 9, "#99b4d1")}
              {[0, 2, 4, 6].map((y) => <path key={y} d={`M${y % 4 ? 2 : 1} ${y + 1.5}h20`} stroke="#fff" strokeDasharray="1 2" />)}
              {[0, 2, 4, 6].map((y) => <path key={y} d={`M${y % 4 ? 3 : 2} ${y + 1.5}h19`} stroke="#333" strokeDasharray="1 2" />)}
            </svg>
            <div className="flex h-[8px] w-[597px] flex-col">
              <i className="h-px bg-white" /><i className="mt-px h-px bg-black" /><i className="mt-[2px] h-px bg-white" /><i className="mt-px h-px bg-black" />
            </div>
            <svg width="40" height="12" viewBox="0 0 40 12" className="shrink-0">
              {r(4, 1, 10, 11, "#444")}{r(4, 1, 9, 10, "#f4f4f4")}{r(18, 1, 10, 11, "#444")}{r(18, 1, 9, 10, "#f4f4f4")}{r(32, 1, 8, 10, "#f4f4f4")}
              {p("M5 6h7M8.500 2.500v7M7 4.500h3M7 7.500h3", "#333", "none", .8)}
              {p("M26 2l-4 4M20.500 4v5h5", "#000", "none", 1.8)}
              {p("M34 3l6 6M40 3l-6 6", "#000", "none", 1.5)}
            </svg>
          </div>

          <div className="ml-[3px] flex shrink-0">
            <Bar c="w-[343px]" pad="ml-[3px] -mt-[3px]">
              <Ic n="doc" /><Arr /><Ic n="open" /><Ic n="save" /><Ic n="reload" /><Ic n="print" /><Sep />
              <Ic n="cut" /><Ic n="copy" /><Ic n="paste" /><Ic n="undo" /><Ic n="redo" /><Sep />
              <Ic n="plus" /><Arr c="w-[8px]" /><Ic n="find" /><Ic n="tree" />
            </Bar>
            <Bar c="ml-px w-[127px]" pad="ml-[5px] -mt-[3px]">
              <Ic n="compile" /><Ic n="help" /><Ic n="all" /><Ic n="sim" /><Ic n="brk" />
            </Bar>
            <Bar c="ml-px w-[420px]" pad="ml-[8px]">
              <Btn n="restart" /><Ic n="aup" c="ml-[2px] w-[23px]" /><Ic n="aleft" /><Ic n="aright" /><Sep />
              <Ic n="runup" c="w-[24px]" />
              <span className="ml-[2px] flex h-[19px] w-[60px] items-center justify-end border border-[#808080] border-r-white border-b-white bg-white font-['Liberation_Mono',monospace] text-[12px] tracking-[-0.2px]">
                500 ps
              </span>
              <span className="mr-[4px] ml-px flex h-[19px] w-[13px] shrink-0 flex-col">
                <SB d="u" c="h-[9px] w-full" /><SB d="d" c="h-[10px] w-full" />
              </span>
              <Ic n="run1" /><Ic n="run2" /><Ic n="run3" /><Ic n="run4" /><Ic n="stop" c="w-[20px]" /><Sep c="w-[14px] ml-[1px]" />
              <Btn n="prof" c="ml-[1px]" /><Btn n="prof" c="ml-[6px]" /><Ic n="hand" c="ml-[3px] w-[22px]" />
            </Bar>
            <Bar c="ml-px w-[160px]" pad="ml-[5px] -mt-[3px]">
              <Ic n="sdown" /><Ic n="sover" /><Ic n="sup" /><Sep /><Ic n="sdown2" /><Ic n="sover2" /><Ic n="sup2" />
            </Bar>
            <Bar c="ml-px w-[154px]" pad="ml-[5px] -mt-[3px]">
              <Ic n="f1" /><Arr c="w-[9px]" /><Ic n="f2" /><Arr c="w-[9px]" /><Ic n="f3" /><Ic n="f4" /><Arr c="w-[8px]" /><Ic n="f5" />
            </Bar>
          </div>

          <div className="ml-[3px] flex h-[34px] shrink-0">
            <Bar c="w-[180px]" pad="ml-[8px] gap-[6px] -mt-px">
              <Btn n="ptr" on /><Btn n="sel" /><Btn n="pan" /><Btn n="twoc" /><Btn n="edit" /><Sep c="w-[5px]" /><Ic n="light" c="w-[18px]" />
            </Bar>
            <Bar c="ml-px w-[193px]" pad="ml-[5px] -mt-[3px]">
              <Ic n="cadd" /><Ic n="cdel" /><Ic n="tprev" /><Ic n="tnext" /><Ic n="fprev" /><Ic n="fnext" /><Ic n="rprev" /><Ic n="rnext" />
            </Bar>
            <Bar c="ml-px w-[360px]" pad="ml-[5px] -mt-[3px]">
              <Ic n="drv" /><Arr c="w-[9px]" /><Ic n="rdr" /><Arr c="w-[8px]" /><Ic n="net" /><Sep c="w-[12px]" />
              <span className="-mt-[3px] ml-[5px] w-[43px] shrink-0 tracking-[0px]">Search:</span>
              <span className="h-[19px] w-[117px] border border-[#808080] border-r-white border-b-white bg-white" />
              <span className="ml-[2px] flex h-[17px] w-[17px] items-center justify-center border border-white border-r-[#555] border-b-[#555]">
                <svg width="12" height="7" viewBox="0 0 12 7"><path d="M0 0h12L6 6.500z" /></svg>
              </span>
              <Ic n="bin1" c="ml-[2px] w-[18px]" /><Ic n="bin2" c="w-[18px]" /><Ic n="opt" c="ml-[2px] w-[22px]" />
            </Bar>
            <Bar c="ml-px w-[149px]" pad="ml-[6px] -mt-[3px]">
              <Ic n="zin" /><Ic n="zout" /><Ic n="zfull" /><Ic n="zc" /><Ic n="zc2" /><Ic n="zsel" />
            </Bar>
            <Bar c="ml-px w-[194px]" pad="ml-[8px] -mt-px">
              <Btn n="w1" on /><Btn n="w2" c="ml-[6px]" /><Btn n="w3" c="ml-[6px]" /><Sep c="ml-[3px] w-[11px]" />
              <Ic n="w4" /><Ic n="w5" /><Ic n="w6" /><Ic n="w7" />
            </Bar>
          </div>

          <main className="ml-[3px] flex h-[556px] shrink-0 border-t border-l border-[#909090] bg-white">
            <section className="flex w-[269px] shrink-0 flex-col border-r border-[#909090] text-white">
              <div className="flex h-[19px] shrink-0 items-center border-b border-[#b0b0b0] bg-[#808080] pl-[8px]">
                <svg width="18" height="16" viewBox="0 0 18 16">
                  <path d="M6 0l5 3-3 6-7-2z" fill="#8a12a8" />{r(9, 6, 8, 7, "#18a048")}
                  <path d="M7 4l6 6-6 6-6-6z" fill="#1450e0" /><circle cx="11" cy="6.500" r="3" fill="#38d0f0" />
                </svg>
                <Arr c="ml-[3px] w-[5px]" />
              </div>
              <div className="mt-[2px] flex h-[469px] shrink-0 flex-col pl-[8px]">
                <div className="flex-1 bg-[#808080] pt-[2px]">
                  {signals.map((s) => (
                    <div key={s.n} className={`flex h-[17px] items-center ${s.s ? "bg-white text-black" : ""}`}>
                      <span className="flex w-[18px] shrink-0 items-center pl-[6px]">
                        {s.x && (
                          <svg width="14" height="10" viewBox="0 0 14 10" className="shrink-0">
                            {r(0, 0, 9, 9, "#fff")}{p("M2 4.500h5M4.500 2v5", "#000")}{r(9, 4, 5, 1, "#ddd")}
                          </svg>
                        )}
                      </span>
                      <Gem a={s.a} />
                      <span className="ml-[4px] whitespace-nowrap tracking-[0.06px]">{s.n}</span>
                    </div>
                  ))}
                  <div className="flex items-center">
                    <svg width="5" height="5" viewBox="0 0 5 5" className="ml-[2px] -mt-[2px] shrink-0">{p("M.5.5v4l3-2z", "#000")}</svg>
                    <i className="-mt-[2px] mr-[3px] h-px flex-1 bg-black" />
                  </div>
                </div>
              </div>
              <div className="mt-px h-[2px] shrink-0 border-t border-[#909090] bg-white" />
              <div className="flex h-[22px] shrink-0 bg-white">
                <div className="flex w-[44px] items-center gap-px bg-[#808080] pl-[9px]">
                  <svg width="36" height="12" viewBox="0 0 36 12">
                    <path d="M1 8l2-5 2 1 2-3v7H1zM0 9h9v2H0z" fill="#555c64" /><path d="M1 10h8" stroke="#9cc" />
                    {r(12, 2, 9, 8, "#b8d4f0")}{p("M13 4.500h7M13 6.500h5", "#48c")}<circle cx="29" cy="6" r="5" fill="#5cb850" />{p("M29 3v6M26 6h6", "#fff", "none", 1.6)}
                  </svg>
                </div>
                <div className="flex flex-1 items-center justify-end pr-[9px] tracking-[-0.1px] text-black">Now</div>
              </div>
              <div className="flex h-[17px] shrink-0 items-center justify-between bg-[#808080] pr-[9px] pl-[11px]">
                <svg width="38" height="12" viewBox="0 0 38 12">
                  <path d="M2 6V3q2-3 5 0" fill="none" stroke="#ddd" strokeWidth="1.500" />{r(1, 5, 9, 6, "#f0b850")}
                  <path d="M13 11l5-5q0-4 4-5l-1 3 2 1 2-1q0 4-4 4l-5 4z" fill="#88a8e0" /><circle cx="31" cy="6" r="5" fill="#e05850" />{p("M28 6h6", "#fff", "none", 1.8)}
                </svg>
                <span className="mt-px tracking-[0px]">Cursor 1</span>
              </div>
              <div className="mt-[3px] flex h-[18px] shrink-0 bg-[#808080] pl-[8px]">
                <SB d="l" off /><div className="flex-1 bg-[#f7f7f7]" /><SB d="r" off />
              </div>
            </section>

            <section className="ml-[2px] flex w-[101px] shrink-0 flex-col border-r border-[#909090] text-white">
              <div className="flex h-[19px] shrink-0 items-center justify-end border-b border-[#b0b0b0] bg-[#808080] pr-[4px] tracking-[-0.1px]">Msgs</div>
              <div className="mt-[2px] h-[469px] shrink-0 bg-[#808080] pt-[2px]">
                {signals.map((s) => (
                  <div key={s.n} className={`flex h-[17px] items-center pl-[2px] tracking-[-0.2px] ${s.s ? "bg-white text-black" : ""}`}>
                    <span className="whitespace-nowrap">{s.v}</span>
                  </div>
                ))}
                <div className="mr-[4px] ml-[2px] h-px bg-black" />
              </div>
              <div className="mt-px h-[2px] shrink-0 border-t border-[#909090] bg-white" />
              <div className="flex h-[22px] shrink-0 items-center justify-end pr-[9px] tracking-[-0.2px] text-black">600 ps</div>
              <div className="flex h-[17px] shrink-0 items-center justify-end bg-[#808080] pr-[9px] tracking-[-0.1px]"><span className="mt-px">0 ps</span></div>
              <div className="mt-[3px] flex h-[18px] shrink-0">
                <SB d="l" /><div className="w-[34px] border border-white border-r-[#696969] border-b-[#696969] bg-[#f0f0f0]" />
                <div className="flex-1 bg-[#f7f7f7]" /><SB d="r" off />
              </div>
            </section>

            <section className="ml-[2px] flex w-[964px] shrink-0 flex-col">
              <div className="flex h-[18px] shrink-0 bg-black pl-[3px]"><i className="mt-px w-px bg-[#d8b040]" /></div>
              <div className="mb-[2px] h-px shrink-0 bg-[#909090]" />
              <Waves />
              <div className="mt-px mb-px h-px shrink-0 bg-[#909090]" />
              <Timeline />
              <div className="mt-[3px] flex h-[18px] shrink-0 border-t border-b-2 border-[#808080] bg-white pr-[2px] pl-[1px]">
                <SB d="l" /><div className="mr-[2px] ml-px flex-1 border-r border-[#696969] bg-[#f0f0f0]" /><SB d="r" c="h-full w-[15px]" />
              </div>
            </section>

            <section className="ml-[2px] flex flex-1 flex-col border-l border-[#808080]">
              <div className="h-[19px] shrink-0 bg-[#808080]" />
              <div className="mt-[2px] flex h-[470px] shrink-0 flex-col items-stretch">
                <div className="h-[17px] pt-[3px]"><SB d="u" c="h-[14px] w-[16px]" /></div>
                <div className="mt-px h-[16px] bg-[#f0f0f0]" />
                <div className="mt-[16px] flex-1 bg-[#f8f8f8]" />
                <SB d="d" c="h-[15px] w-[16px]" />
                <div className="h-[3px] border-b border-[#909090]" />
              </div>
              <div className="mt-[2px] h-[39px] shrink-0 bg-[#808080]" />
              <div className="mt-[3px] h-[18px] shrink-0 bg-[#808080]" />
            </section>
          </main>

          <footer className="ml-[2px] flex h-[19px] shrink-0 border-l border-t border-[#a0a0a0]">
            <div className="flex w-[169px] shrink-0 items-center border-r border-white pt-px pl-[5px] tracking-[-0.15px]">0 ps to 897 ps</div>
            <div className="flex-1 border-l border-[#a0a0a0]" />
            <svg width="12" height="18" viewBox="0 0 12 18">{p("M6 17l6-6M10 17l2-2", "#888")}</svg>
          </footer>
          <div className="h-[2px] shrink-0 border-b border-[#a0a0a0] bg-white" />
        </div>
        <div className="flex-1 border-b border-[#9c4c60]" />
      </div>

      <footer className="flex h-[40px] shrink-0 items-stretch bg-[linear-gradient(90deg,#9c6068_0,#ac6f76_60px,#a8686f_400px,#854a5a_480px,#84495a_700px,#935c6e_760px,#9a6074_960px,#ad737c_1120px,#a8707a_1366px)] pl-[15px]">
        {taskIcons.map((t) => (
          <div key={t.k} className="flex w-[52.850px] shrink-0 justify-center">
            <div
              className={`flex h-[39px] justify-center ${
                t.b ? "border border-[#d8a8b0] bg-[#c98f99]/60 pt-[3px]" : "w-[50px] pt-[4px]"
              } ${t.b ? (t.k === "chrome" ? "w-[46px]" : "w-[50px]") : ""}`}
            >
              <svg width="32" height="32" viewBox="0 0 32 32" className="shrink-0">{t.g}</svg>
            </div>
            {t.k === "chrome" && <div className="h-[39px] w-[4px] border border-l-0 border-[#d8a8b0] bg-[#b87c86]" />}
          </div>
        ))}
        <div className="flex w-[49px] shrink-0 border border-[#e8c8cc]">
          <div className="flex w-[44px] justify-center border-r border-[#e8c8cc] bg-[#dcb4ba] pt-[3px]">
            <svg width="32" height="32" viewBox="0 0 32 32">{M}</svg>
          </div>
        </div>
        <svg width="140" height="20" viewBox="0 0 140 20" className="mt-[11px] ml-[9px] shrink-0">
          <path d="M1 12h8L5 8z" fill="#fff" />
          {p("M24.500 3v14", "#fff", "none", 2)}<path d="M26 4h5v1h5v7h-5v-1h-5z" fill="#fff" fillOpacity=".35" stroke="#fff" strokeWidth="1.300" />
          <circle cx="34" cy="13" r="4.500" fill="#d83838" />{p("M32 11l4 4M36 11l-4 4", "#fff", "none", 1.4)}
          <circle cx="54" cy="10" r="7" fill="#d81c28" />{p("M50.500 13V7.500l3.500 3.500 3.500-3.500V13", "#fff", "none", 1.8)}
          {p("M80.500 3.500h6v13h-6zM82 2.500h3M73 3v3M76 3v3M71.500 6.500h6v3h-6zM74.500 10v6.500h4", "#fff", "none", 1.4)}
          {r(95, 14, 2, 2, "#fff")}{r(98, 12, 2, 4, "#fff")}{r(101, 9, 2, 7, "#fff")}{r(104, 6, 2, 10, "#fff")}{r(107, 4, 2, 12, "#fff")}
          <path d="M119 7h3l4-4v14l-4-4h-3z" fill="none" stroke="#fff" strokeWidth="1.400" />{p("M128 7q2 3 0 6M130.500 5q3 5 0 10", "#fff", "none", 1.2)}
        </svg>
        <div className="flex flex-1 flex-col items-center pt-[4px] pr-[11px] font-['Open_Sans',sans-serif] text-[11.500px] leading-[17px] tracking-[-0.3px] text-white">
          <span>21:59</span><span>19/06/2017</span>
        </div>
      </footer>
    </div>
  );
}
